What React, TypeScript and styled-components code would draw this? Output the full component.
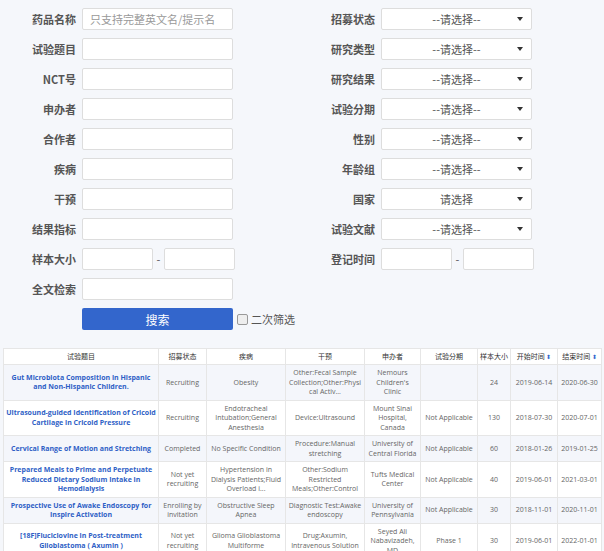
import React from "react";
import styled, { createGlobalStyle } from "styled-components";

const G = createGlobalStyle`
  body { margin:0; background:#f5f7fb; font-family:"Noto Sans CJK SC","Open Sans",sans-serif; }
`;
const Form = styled.div`display:grid;grid-template-columns:299px 305px;padding-top:8px;`;
const Col = styled.div`display:flex;flex-direction:column;gap:8px;`;
const Row = styled.div`display:flex;align-items:center;height:22px;`;
const Label = styled.div<{w:number}>`width:${p=>p.w}px;text-align:right;padding-right:6px;box-sizing:border-box;font-size:11px;font-weight:bold;color:#555;`;
const Input = styled.div<{w?:number}>`width:${p=>p.w??151}px;height:22px;box-sizing:border-box;background:#fff;border:1px solid #ddd;border-radius:2px;font-size:11px;color:#999;padding:0 7px;display:flex;align-items:center;`;
const Select = styled(Input)`justify-content:center;color:#555;position:relative;`;
const Caret = styled.span`position:absolute;right:8px;top:8px;border-left:3px solid transparent;border-right:3px solid transparent;border-top:4px solid #333;`;
const Dash = styled.span`width:11px;text-align:center;font-size:11px;color:#555;`;
const Btn = styled.div`width:151px;height:22px;background:#3366cc;color:#fff;font-size:12px;display:flex;align-items:center;justify-content:center;border-radius:2px;`;
const Chk = styled.span`display:inline-block;width:9px;height:9px;border:1px solid #999;border-radius:2px;background:#eee;margin:0 3px 0 4px;`;
const ChkL = styled.span`font-size:11px;color:#555;`;
const Table = styled.table`margin:18px 3px 0;width:598px;border-collapse:collapse;table-layout:fixed;font-family:"Open Sans",sans-serif;font-size:7px;line-height:9.5px;`;
const Th = styled.th`font-weight:normal;color:#333;background:#fff;height:15px;border:1px solid #e6e6e6;padding:0 1px;font-family:"Noto Sans CJK SC",sans-serif;white-space:nowrap;overflow:hidden;`;
const Tr = styled.tr<{alt:boolean}>`background:${p=>p.alt?"#f4f6fb":"#fff"};`;
const Td = styled.td<{title_?:boolean}>`border:1px solid #e6e6e6;text-align:center;padding:3px 2px;color:${p=>p.title_?"#2f5fc6":"#666"};font-weight:${p=>p.title_?"bold":"normal"};word-break:break-word;`;
const Sort = styled.span`color:#3366cc;font-size:6px;`;

const left = ["药品名称","试验题目","NCT号","申办者","合作者","疾病","干预","结果指标"];
const right = ["招募状态","研究类型","研究结果","试验分期","性别","年龄组","国家","试验文献"];
const heads:[string,number,boolean?][] = [["试验题目",155],["招募状态",48],["疾病",79],["干预",79],["申办者",56],["试验分期",57],["样本大小",33],["开始时间",47,true],["结束时间",44,true]];
const rows = [
 ["Gut Microbiota Composition in Hispanic and Non-Hispanic Children.","Recruiting","Obesity","Other:Fecal Sample Collection;Other:Physical Activ...","Nemours Children's Clinic","","24","2019-06-14","2020-06-30"],
 ["Ultrasound-guided Identification of Cricoid Cartilage in Cricoid Pressure","Recruiting","Endotracheal Intubation;General Anesthesia","Device:Ultrasound","Mount Sinai Hospital, Canada","Not Applicable","130","2018-07-30","2020-07-01"],
 ["Cervical Range of Motion and Stretching","Completed","No Specific Condition","Procedure:Manual stretching","University of Central Florida","Not Applicable","60","2018-01-26","2019-01-25"],
 ["Prepared Meals to Prime and Perpetuate Reduced Dietary Sodium Intake in Hemodialysis","Not yet recruiting","Hypertension in Dialysis Patients;Fluid Overload i...","Other:Sodium Restricted Meals;Other:Control","Tufts Medical Center","Not Applicable","40","2019-06-01","2021-03-01"],
 ["Prospective Use of Awake Endoscopy for Inspire Activation","Enrolling by invitation","Obstructive Sleep Apnea","Diagnostic Test:Awake endoscopy","University of Pennsylvania","Not Applicable","30","2018-11-01","2020-11-01"],
 ["[18F]Fluciclovine in Post-treatment Glioblastoma ( Axumin )","Not yet recruiting","Glioma Glioblastoma Multiforme","Drug:Axumin, Intravenous Solution","Seyed Ali Nabavizadeh, MD","Phase 1","30","2019-06-01","2022-01-01"],
];

export default function App(){
  return <>
    <G/>
    <Form>
      <Col>
        {left.map((l,i)=><Row key={l}><Label w={82}>{l}</Label><Input>{i===0?"只支持完整英文名/提示名":""}</Input></Row>)}
        <Row><Label w={82}>样本大小</Label><Input w={71}/><Dash>-</Dash><Input w={71}/></Row>
        <Row><Label w={82}>全文检索</Label><Input/></Row>
        <Row><Label w={82}></Label><Btn>搜索</Btn><Chk/><ChkL>二次筛选</ChkL></Row>
      </Col>
      <Col>
        {right.map((l,i)=><Row key={l}><Label w={82}>{l}</Label><Select>{i===6?"请选择":"--请选择--"}<Caret/></Select></Row>)}
        <Row><Label w={82}>登记时间</Label><Input w={71}/><Dash>-</Dash><Input w={71}/></Row>
      </Col>
    </Form>
    <Table>
      <colgroup>{heads.map(([h,w])=><col key={h} style={{width:w}}/>)}</colgroup>
      <thead><tr>{heads.map(([h,,s])=><Th key={h}>{h}{s&&<Sort> ⬍</Sort>}</Th>)}</tr></thead>
      <tbody>{rows.map((r,i)=><Tr key={i} alt={i%2===0}>{r.map((c,j)=><Td key={j} title_={j===0}>{c}</Td>)}</Tr>)}</tbody>
    </Table>
  </>;
}
